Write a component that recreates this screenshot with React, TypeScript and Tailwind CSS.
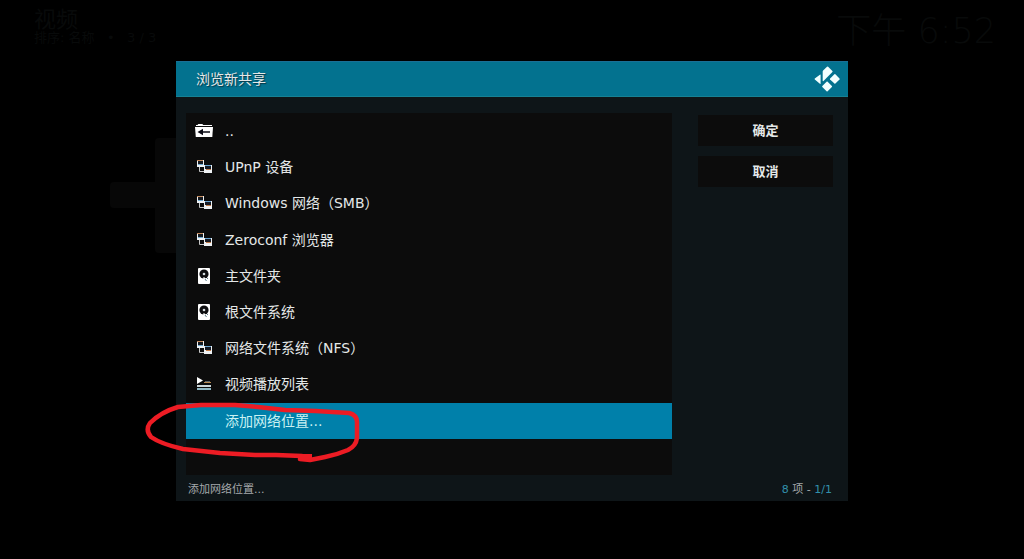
import { useState } from "react";

type IconKind = "up" | "network" | "disk" | "playlist" | "none";

interface Entry {
  label: string;
  icon: IconKind;
  protocol?: string;
}

const entries: Entry[] = [
  { label: "..", icon: "up" },
  { label: "UPnP 设备", icon: "network" },
  { label: "Windows 网络", protocol: "SMB", icon: "network" },
  { label: "Zeroconf 浏览器", icon: "network" },
  { label: "主文件夹", icon: "disk" },
  { label: "根文件系统", icon: "disk" },
  { label: "网络文件系统", protocol: "NFS", icon: "network" },
  { label: "视频播放列表", icon: "playlist" },
  { label: "添加网络位置...", icon: "none" },
];

function EntryIcon({ kind }: { kind: IconKind }) {
  if (kind === "up") {
    return (
      <svg viewBox="0 0 20 20" className="size-5" aria-hidden="true">
        <path d="M2 5V4h1.500l.8-1h4l1 1H18v1z" fill="#fff" />
        <path d="M1 6h18l-.7 10H1.800z" fill="#fff" />
        <path d="M3.500 11L9 7.800v2.400h7v1.600H9v2.400z" fill="#0c0c16" />
      </svg>
    );
  }
  if (kind === "network") {
    return (
      <svg viewBox="0 0 20 20" className="size-5" aria-hidden="true">
        <path d="M5.500 9v5.500H10" fill="none" stroke="#c8c8c8" />
        <rect x="3" y="3" width="7" height="7" fill="#eef1f3" />
        <rect x="4" y="4" width="5" height="3" fill="#161a20" />
        <path d="M3 3.500h6" stroke="#c48a5c" />
        <path d="M4 7.500h5" stroke="#72a9cf" />
        <rect x="10" y="8" width="8" height="8" fill="#eef1f3" />
        <rect x="11" y="9" width="6" height="3" fill="#171b24" />
        <path d="M11 8.500h6" stroke="#68a4d2" />
        <path d="M12 12.500h5" stroke="#c07a48" />
      </svg>
    );
  }
  if (kind === "disk") {
    return (
      <svg viewBox="0 0 20 20" className="size-5" aria-hidden="true">
        <rect x="4" y="2" width="12" height="16" rx="1" fill="#fff" />
        <circle cx="10" cy="8" r="4.600" fill="#0d0d0f" />
        <circle cx="10" cy="8" r="1.300" fill="#d5dde0" />
        <path d="M9.500 11.500l2.500 3" stroke="#fff" strokeWidth="1.500" />
        <path d="M11 13l1.500 2M13.500 12v1" stroke="#5e7d88" />
      </svg>
    );
  }
  if (kind === "playlist") {
    return (
      <svg viewBox="0 0 20 20" className="size-5" aria-hidden="true">
        <path d="M3 3l6 3.500L3 10z" fill="#fff" />
        <path d="M10 8.500h7" stroke="#b98a52" />
        <path d="M11 7.500h5" stroke="#59636b" />
        <path d="M3 12h14" stroke="#cdd7d9" strokeWidth="2" />
        <path d="M3 15h14" stroke="#8fb8c4" strokeWidth="2" />
      </svg>
    );
  }
  return null;
}

function KodiLogo() {
  return (
    <svg viewBox="0 0 26 26" className="size-[26px]" fill="#f2ffff" role="img" aria-label="Kodi">
      <path d="M13 .7q.6-.4 1.100 0l4.300 4.300q.5.500 0 1.100L9.500 15q-.8.500-.8-.5V5.600q0-.6.400-1z" />
      <path d="M5.900 8.800q.7-.6.700.3v8.400q0 .8-.7.200L.8 13.600q-.5-.6 0-1.100z" />
      <path d="M20.400 8.200q.5-.4 1 0l4.100 4.300q.4.500 0 1l-4.100 4.100q-.5.400-1 0l-4.300-4.100q-.4-.5 0-1z" />
      <path d="M12.600 15.700q.5-.4 1 0l4.300 4.200q.4.500 0 1l-4.300 4.300q-.5.400-1 0l-4.300-4.300q-.4-.5 0-1z" />
    </svg>
  );
}

function EntryLabel({ entry }: { entry: Entry }) {
  if (!entry.protocol) {
    return <span>{entry.label}</span>;
  }
  return (
    <span>
      {entry.label}
      <span lang="zh-TW" className="font-['DejaVu_Sans','Noto_Sans_CJK_TC',sans-serif]">
        （{entry.protocol}）
      </span>
    </span>
  );
}

export default function App() {
  const [selected, setSelected] = useState(8);

  return (
    <div className="relative flex min-h-screen flex-col overflow-hidden bg-black font-['DejaVu_Sans','Noto_Sans_CJK_SC',sans-serif]">
      <div className="absolute left-[110px] top-[182px] h-[26px] w-24 rounded-sm bg-[#070707]" />
      <div className="absolute left-[155px] top-[138px] h-[115px] w-10 rounded-sm bg-[#070707]" />

      <header className="flex h-[61px] items-start justify-between pl-[34px] pr-7 pt-2 text-[#080a0a]">
        <div>
          <h1 className="text-[22px] leading-6">视频</h1>
          <p className="whitespace-pre text-[13px] leading-3">排序: 名称   •   3 / 3</p>
        </div>
        <time className="text-[35px] font-extralight leading-[46px]">下午 6:52</time>
      </header>

      <section
        role="dialog"
        aria-labelledby="dialog-title"
        className="relative mx-44 flex flex-col bg-[#0e1518] text-[#e4e8e8]"
      >
        <div className="flex h-9 items-center justify-between border-y border-t-[#1a6f96] border-b-[#168193] bg-[#03728f] pl-5 pr-2">
          <h2 id="dialog-title" className="text-sm [text-shadow:1px_1px_1px_#073746]">
            浏览新共享
          </h2>
          <KodiLogo />
        </div>

        <div className="flex gap-[26px] pl-2.5 pr-[15px] pt-4">
          <ul className="grid h-[362px] min-w-0 flex-1 grid-rows-10 bg-[#0c0c0c]">
            {entries.map((entry, index) => (
              <li key={entry.label} className="flex">
                <button
                  type="button"
                  aria-pressed={index === selected}
                  onClick={() => setSelected(index)}
                  className={
                    index === selected
                      ? "flex w-full items-center gap-[11px] bg-[#0080aa] pl-2 text-left text-sm text-[#c9f1f2]"
                      : "flex w-full items-center gap-[11px] pl-2 text-left text-sm"
                  }
                >
                  <span className="size-5">
                    <EntryIcon kind={entry.icon} />
                  </span>
                  <EntryLabel entry={entry} />
                </button>
              </li>
            ))}
          </ul>

          <div className="flex w-[135px] flex-col gap-2.5 pt-0.5 text-[13px] font-bold">
            <button type="button" className="h-[31px] bg-[#0c0c0c]">
              确定
            </button>
            <button type="button" className="h-[31px] bg-[#0c0c0c]">
              取消
            </button>
          </div>
        </div>

        <footer className="flex h-[26px] items-center justify-between pl-3 pr-4 pt-1 text-[11px] text-[#a5a9ab]">
          <span>添加网络位置...</span>
          <span>
            <span className="text-[#3290ac]">8</span> 项 - <span className="text-[#3290ac]">1/1</span>
          </span>
        </footer>
      </section>

      <svg
        viewBox="0 0 220 64"
        className="pointer-events-none absolute left-[144px] top-[400px] h-16 w-[220px]"
        fill="none"
        stroke="#ed1c24"
        strokeWidth="4.500"
        strokeLinecap="round"
        strokeLinejoin="round"
        aria-hidden="true"
      >
        <path d="M158 56L132 55L111 55L76 53L39 49Q17 44 7 37Q1 30 6 23Q17 12 34 7L57 5L91 5L114 7L141 10L172 11L205 13Q213 15 213 22L213 38Q212 46 204 50Q192 55 181 57L166 60L156 59" />
        <path d="M157 57h8" strokeWidth="6" strokeLinecap="square" />
      </svg>
    </div>
  );
}
